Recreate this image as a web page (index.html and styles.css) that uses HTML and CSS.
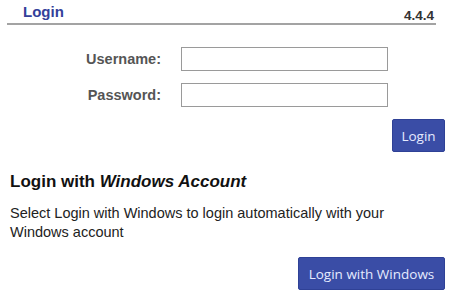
FILE: index.html
```html
<!DOCTYPE html>
<html lang="en">
<head>
    <meta charset="UTF-8">
    <title>Login</title>
    <link rel="stylesheet" href="styles.css">
</head>
<body>

<!-- title bar -->
<div class="header">
    <h1>Login</h1>
    <span class="version">4.4.4</span>
</div>

<!-- username / password -->
<form class="login-form">
    <div class="field">
        <label for="username">Username:</label>
        <input type="text" id="username">
    </div>
    <div class="field">
        <label for="password">Password:</label>
        <input type="password" id="password">
    </div>
    <div class="actions">
        <button type="button" class="btn btn-login">Login</button>
    </div>
</form>

<!-- windows login -->
<div class="windows-login">
    <h2>Login with <em>Windows Account</em></h2>
    <p>Select Login with Windows to login automatically with your Windows account</p>
    <div class="actions">
        <button type="button" class="btn btn-windows">Login with Windows</button>
    </div>
</div>

</body>
</html>
```

FILE: styles.css
```css
body {
    font-family: "Liberation Sans", Arial, sans-serif;
    background-color: #ffffff;
    color: #111111;
    margin: 0;
    padding: 0;
}
.header {
    margin: 0 20px 0 7px;
    padding: 3px 2px 0 16px;
    height: 20px;
    display: flex;
    justify-content: space-between;
    align-items: flex-end;
    border-bottom: 2px solid #a3a3a3;
}
.header h1 {
    margin: 0;
    font-size: 15px;
    line-height: 18px;
    color: #33409a;
    align-self: flex-start;
}
.version {
    font-size: 13.5px;
    font-weight: bold;
    color: #333333;
    line-height: 14px;
}
.login-form {
    margin: 0;
    padding-top: 22px;
}
.field {
    display: flex;
    align-items: center;
    margin-bottom: 12px;
}
.field label {
    width: 161px;
    text-align: right;
    margin-right: 20px;
    font-size: 14.5px;
    font-weight: bold;
    color: #555555;
}
.field input {
    width: 207px;
    height: 24px;
    box-sizing: border-box;
    border: 1px solid #9a9a9a;
    background-color: #ffffff;
    padding: 2px 4px;
    margin: 0;
}
.actions {
    display: flex;
    justify-content: flex-end;
    padding-right: 11px;
}
.login-form .actions {
    margin-top: 1px;
}
.btn {
    font-family: "Open Sans", "DejaVu Sans", sans-serif;
    font-size: 13.5px;
    color: #e6ebff;
    background-color: #3a4da6;
    border: 1px solid #2f4196;
    border-radius: 2px;
    height: 33px;
    padding: 0;
    cursor: pointer;
}
.btn-login {
    width: 53px;
}
.btn-windows {
    width: 147px;
}
.windows-login {
    padding: 0 10px;
}
.windows-login h2 {
    margin: 20px 0 0 0;
    font-size: 17px;
    line-height: 20px;
    color: #111111;
}
.windows-login p {
    margin: 12px 0 0 0;
    font-size: 14.5px;
    line-height: 19px;
    color: #222222;
    width: 420px;
}
.windows-login .actions {
    margin-top: 15px;
    padding-right: 1px;
}
```
